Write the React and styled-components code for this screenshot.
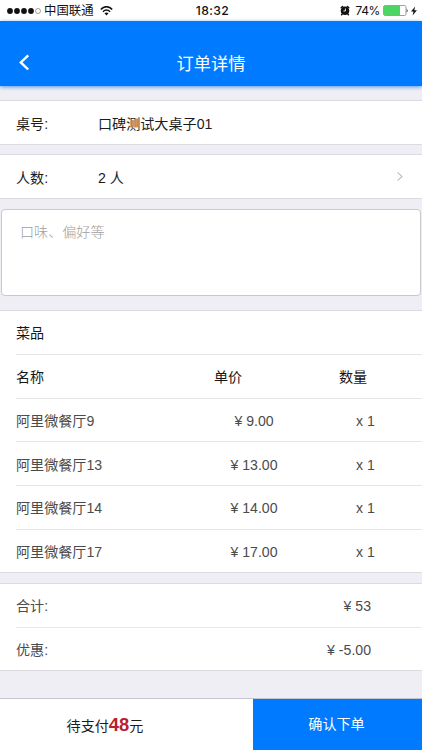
import React from 'react';
import styled, { createGlobalStyle } from 'styled-components';

const GlobalStyle = createGlobalStyle`
  * { box-sizing: border-box; }
  body {
    margin: 0;
    background: #efeef4;
    font-family: "Liberation Sans", "Noto Sans CJK SC", sans-serif;
    font-size: 14.1px;
    line-height: 20px;
    color: #1c1c1c;
  }
`;

const Screen = styled.div`
  display: flex;
  flex-direction: column;
  width: 422px;
  height: 750px;
  overflow: hidden;
  background: #efeef4;
`;

const StatusBar = styled.div`
  display: grid;
  grid-template-columns: 1fr auto 1fr;
  align-items: center;
  flex: none;
  height: 21px;
  padding: 0 5px 0 7px;
  background: #fff;
  color: #111;
  font-family: Inter, "Noto Sans CJK SC", sans-serif;
  font-size: 12.5px;
  line-height: 21px;
`;

const Carrier = styled.div`
  display: flex;
  align-items: center;
  height: 21px;
  svg { flex: none; }
`;

const CarrierName = styled.span`
  margin: 0 6px 0 3px;
  font-size: 12.4px;
`;

const Clock = styled.span`
  padding-left: 1px;
  font-weight: 500;
  font-size: 12.2px;
  letter-spacing: 0.4px;
`;

const Power = styled.div`
  display: flex;
  align-items: center;
  justify-content: flex-end;
  height: 21px;
  svg { flex: none; }
`;

const Percent = styled.span`
  margin: 0 3px 0 6px;
  font-size: 12px;
  letter-spacing: -0.4px;
`;

const Header = styled.header`
  display: grid;
  grid-template-columns: 48px 1fr 48px;
  align-items: center;
  flex: none;
  height: 65px;
  padding-top: 19px;
  background: #007aff;
  color: #fff;
  box-shadow: 0 1px 4px rgba(0, 105, 225, 0.65);
  z-index: 1;
`;

const BackButton = styled.button`
  display: flex;
  padding: 0 0 1px 18px;
  border: 0;
  background: none;
  color: inherit;
`;

const Title = styled.h1`
  margin: 0;
  padding-top: 2px;
  text-align: center;
  font-size: 17.2px;
  font-weight: 400;
  line-height: 44px;
`;

const Card = styled.section`
  flex: none;
  height: ${(p) => p.$height}px;
  margin-top: ${(p) => p.$gap}px;
  border: solid #dcdbe1;
  border-width: 1px 0;
  background: #fff;
`;

const Field = styled.div`
  display: grid;
  grid-template-columns: 82px 1fr 10px;
  align-items: center;
  height: 100%;
  padding: 3px 16px 0;
  svg { margin-top: -4px; }
`;

const NoteBox = styled.div`
  flex: none;
  height: 87px;
  margin: 10px 1px 0;
  padding: 12px 18px;
  border: 1px solid #c9c9cd;
  border-radius: 4px;
  background: #fff;
  color: #a0a0a0;
  font-weight: 300;
  line-height: 21px;
`;

const Row = styled.div`
  display: grid;
  grid-template-columns: 184px 108px 1fr;
  align-items: center;
  height: 43.8px;
  margin-left: 16px;
  padding-top: ${(p) => (p.$last ? 0 : 1.6)}px;
  border-bottom: ${(p) => (p.$last ? '0' : '1px solid #e6e6e6')};
  color: ${(p) => (p.$strong ? '#161616' : '#4b4b4b')};
`;

const HeadCell = styled.span`
  padding-left: ${(p) => p.$indent}px;
`;

const PriceCell = styled.span`
  text-align: center;
`;

const CountCell = styled.span`
  padding-left: 48px;
`;

const TotalRow = styled.div`
  display: flex;
  justify-content: space-between;
  align-items: center;
  height: ${(p) => (p.$last ? 42 : 44)}px;
  margin-left: 16px;
  padding: ${(p) => (p.$last ? 2 : 1)}px 51px 0 0;
  border-bottom: ${(p) => (p.$last ? '0' : '1px solid #e8e8e8')};
  color: #4b4b4b;
`;

const Footer = styled.footer`
  display: grid;
  grid-template-columns: 253px 1fr;
  flex: none;
  height: 52px;
  margin-top: 27px;
  border-top: 1px solid #c5c5d1;
  background: #fff;
`;

const Due = styled.div`
  display: flex;
  align-items: baseline;
  justify-content: center;
  padding: 13px 43px 0 0;
  line-height: 26px;
`;

const Amount = styled.strong`
  color: #b91f2c;
  font-size: 18.4px;
`;

const Confirm = styled.button`
  padding: 0 2px 1px 0;
  border: 0;
  background: #007aff;
  color: #fff;
  font: inherit;
`;

const dishes = [
  { name: '阿里微餐厅9', price: '¥ 9.00' },
  { name: '阿里微餐厅13', price: '¥ 13.00' },
  { name: '阿里微餐厅14', price: '¥ 14.00' },
  { name: '阿里微餐厅17', price: '¥ 17.00' },
];

const SignalDots = () => (
  <svg width="34" height="8" viewBox="0 0 34 8">
    {[3, 10, 17, 24].map((x) => <circle key={x} cx={x} cy="4" r="2.9" fill="#111" />)}
    <circle cx="31" cy="4" r="2.5" fill="none" stroke="#777" strokeWidth="0.7" />
  </svg>
);

const WifiIcon = () => (
  <svg width="13" height="10" viewBox="0 0 13 10" fill="none" stroke="#111" strokeWidth="1.5">
    <path d="M0.8 3.5C4-0.3 9-0.3 12.2 3.5" />
    <path d="M2.9 5.7Q6.5 2.2 10.1 5.7" />
    <path d="M4.5 7.2Q6.5 5.7 8.5 7.2L6.5 9.5Z" fill="#111" stroke="none" />
  </svg>
);

const AlarmIcon = () => (
  <svg width="10" height="11" viewBox="0 0 10 11" fill="none">
    <path d="M1.2 2.8L2.6 1.5M7.4 1.5L8.8 2.8M2.4 8.8L1.6 9.7M7.6 8.8L8.4 9.7" stroke="#111" strokeWidth="1.5" strokeLinecap="round" />
    <circle cx="5" cy="5.8" r="4.3" fill="#111" />
    <path d="M5.4 3.5V6H3.4" stroke="#fff" strokeWidth="0.9" />
  </svg>
);

const BatteryIcon = () => (
  <svg width="26" height="11" viewBox="0 0 26 11">
    <rect x="0.5" y="0.5" width="22.5" height="10" rx="1.6" fill="#fff" stroke="#858585" strokeWidth="0.8" />
    <path d="M1 1H17V10H1Z" fill="#4cd562" />
    <path d="M23.7 3.5Q25.5 5.5 23.7 7.5Z" fill="#333" />
  </svg>
);

const BoltIcon = () => (
  <svg width="8" height="10" viewBox="-1.5 0 8 10">
    <path d="M4.7 0.4L0.5 5.6H3L2.1 9.6L6.4 4.2H3.8Z" fill="#111" />
  </svg>
);

const BackIcon = () => (
  <svg width="12" height="17" viewBox="0 0 12 17" fill="none" stroke="#fff" strokeWidth="2.4">
    <path d="M10.2 1.3L2.8 8.4L10.2 15.5" />
  </svg>
);

const ChevronIcon = () => (
  <svg width="8" height="11" viewBox="0 0 8 11" fill="none" stroke="#bdbdc2" strokeWidth="1.1">
    <path d="M1.5 1.3L6 5.5L1.5 9.7" />
  </svg>
);

export default function App() {
  return (
    <>
      <GlobalStyle />
      <Screen>
        <StatusBar>
          <Carrier>
            <SignalDots />
            <CarrierName>中国联通</CarrierName>
            <WifiIcon />
          </Carrier>
          <Clock>18:32</Clock>
          <Power>
            <AlarmIcon />
            <Percent>74%</Percent>
            <BatteryIcon />
            <BoltIcon />
          </Power>
        </StatusBar>
        <Header>
          <BackButton aria-label="返回"><BackIcon /></BackButton>
          <Title>订单详情</Title>
        </Header>
        <Card $gap={14} $height={45}>
          <Field><span>桌号:</span><span>口碑测试大桌子01</span></Field>
        </Card>
        <Card $gap={9} $height={45}>
          <Field><span>人数:</span><span>2 人</span><ChevronIcon /></Field>
        </Card>
        <NoteBox>口味、偏好等</NoteBox>
        <Card $gap={14} $height={263}>
          <Row $strong><span>菜品</span></Row>
          <Row $strong>
            <span>名称</span>
            <HeadCell $indent={14}>单价</HeadCell>
            <HeadCell $indent={31}>数量</HeadCell>
          </Row>
          {dishes.map((dish, i) => (
            <Row key={dish.name} $last={i === dishes.length - 1}>
              <span>{dish.name}</span>
              <PriceCell>{dish.price}</PriceCell>
              <CountCell>x 1</CountCell>
            </Row>
          ))}
        </Card>
        <Card $gap={10} $height={88}>
          <TotalRow><span>合计:</span><span>¥ 53</span></TotalRow>
          <TotalRow $last><span>优惠:</span><span>¥ -5.00</span></TotalRow>
        </Card>
        <Footer>
          <Due>待支付<Amount>48</Amount>元</Due>
          <Confirm>确认下单</Confirm>
        </Footer>
      </Screen>
    </>
  );
}
